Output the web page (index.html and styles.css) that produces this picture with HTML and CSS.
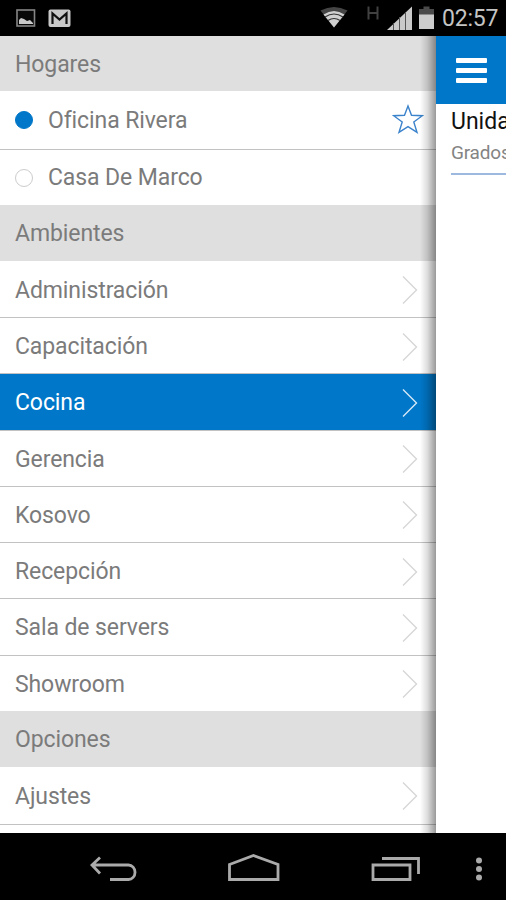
FILE: index.html
```html
<!DOCTYPE html>
<html lang="es">
<head>
<meta charset="utf-8">
<title>Hogares</title>
<link rel="stylesheet" href="styles.css">
</head>
<body>
<div class="phone">
  <header class="status">
    <svg class="notices" width="100" height="36" viewBox="0 0 100 36">
      <rect x="17" y="10" width="17.5" height="16" fill="#080808" stroke="#858585" stroke-width="1.6"/>
      <path d="M19 24v-4l2-2 3 1 3 2 3-1 3 3v1z" fill="#c9c9c9"/>
      <rect x="48.500" y="9.500" width="22" height="17.500" rx="2" fill="#c8c8c8"/>
      <path d="M52.500 24V13.500l7 6 7-6V24" fill="none" stroke="#111" stroke-width="2.200"/>
    </svg>
    <div class="signals">
      <svg width="134" height="36" viewBox="0 0 134 36">
        <path d="M14 27.500L.5 10.500Q14 3.500 27.500 10.500z" fill="#454545"/>
        <path d="M14 27.500L3.500 14.500Q14 7.500 24.500 14.500z" fill="#d0d0d0"/>
        <path d="M5 17q9-6 18 0M8 20.500q6-4 12 0" fill="none" stroke="#333" stroke-width="1.100"/>
        <path d="M48.500 6.500v13M57.500 6.500v13M48.500 13h9" fill="none" stroke="#414141" stroke-width="2"/>
        <path d="M67 30L92 6.500V30z" fill="#c9c9c9"/>
        <path d="M73.500 23v7M79.500 17v13M85.500 12v18" stroke="#555" stroke-width="1"/>
        <path d="M99 29V9h4.500V6.500h6V9h4.500v20z" fill="#4a4a4a"/>
        <path d="M99 14.500h15V29H99z" fill="#ccc"/>
      </svg>
      <span class="clock">02:57</span>
    </div>
  </header>

  <main class="stage">
    <nav class="drawer">
      <h2 class="heading">Hogares</h2>
      <a class="row home first"><i class="dot on"></i><span>Oficina Rivera</span>
        <svg class="star" width="32" height="32" viewBox="0 0 32 32"><path d="M16 2l3.500 9.300 10.800.4-8.500 6.300 3.200 10.300L16 22.600l-9 5.700 3.200-10.300L1.700 11.700l10.800-.4z" fill="none" stroke="#3b83cb" stroke-width="1.400"/></svg></a>
      <a class="row home last"><i class="dot"></i><span>Casa De Marco</span></a>
      <h2 class="heading">Ambientes</h2>
      <a class="row tall"><span>Administración</span><svg class="chev" viewBox="0 0 16 30"><path d="M1 1.500L14.500 15 1 28.500"/></svg></a>
      <a class="row"><span>Capacitación</span><svg class="chev" viewBox="0 0 16 30"><path d="M1 1.500L14.500 15 1 28.500"/></svg></a>
      <a class="row active"><span>Cocina</span><svg class="chev" viewBox="0 0 16 30"><path d="M1 1.500L14.500 15 1 28.500"/></svg></a>
      <a class="row"><span>Gerencia</span><svg class="chev" viewBox="0 0 16 30"><path d="M1 1.500L14.500 15 1 28.500"/></svg></a>
      <a class="row"><span>Kosovo</span><svg class="chev" viewBox="0 0 16 30"><path d="M1 1.500L14.500 15 1 28.500"/></svg></a>
      <a class="row"><span>Recepción</span><svg class="chev" viewBox="0 0 16 30"><path d="M1 1.500L14.500 15 1 28.500"/></svg></a>
      <a class="row"><span>Sala de servers</span><svg class="chev" viewBox="0 0 16 30"><path d="M1 1.500L14.500 15 1 28.500"/></svg></a>
      <a class="row last"><span>Showroom</span><svg class="chev" viewBox="0 0 16 30"><path d="M1 1.500L14.500 15 1 28.500"/></svg></a>
      <h2 class="heading">Opciones</h2>
      <a class="row end"><span>Ajustes</span><svg class="chev" viewBox="0 0 16 30"><path d="M1 1.500L14.500 15 1 28.500"/></svg></a>
    </nav>
    <section class="page">
      <div class="bar"><i></i><i></i><i></i></div>
      <div class="setting">
        <div class="title">Unidad</div>
        <div class="sub">Grados</div>
      </div>
    </section>
  </main>

  <footer class="navbar">
    <svg width="506" height="67" viewBox="0 0 506 67">
      <g fill="none" stroke="#aaa" stroke-width="2.800">
        <path d="M92 32h36.500a6.500 7.200 0 0 1 0 14.500H110M100 24.500L92 32l8 8.500"/>
        <path d="M229.500 31.500l24-9 24.500 9v15h-48.500z"/>
        <path d="M373 32h37v14.500h-37zM382 25.500h36.500V41"/>
      </g>
      <g fill="#aaa"><circle cx="479" cy="27.500" r="3"/><circle cx="479" cy="36" r="3"/><circle cx="479" cy="44.500" r="3"/></g>
    </svg>
  </footer>
</div>
</body>
</html>
```
FILE: styles.css
```css
* { box-sizing: border-box; }
body { margin: 0; font-family: Roboto, "Liberation Sans", sans-serif; background: #000; }
.phone { width: 506px; height: 900px; overflow: hidden; display: flex; flex-direction: column; }
svg { display: block; flex: none; }

.status { height: 36px; flex: none; display: flex; justify-content: space-between; background: #000; }
.signals { display: flex; width: 186px; }
.signals svg { margin-right: -12px; }
.clock { font-size: 23px; line-height: 38px; color: #c4c4c4; letter-spacing: -0.2px; }

.stage { height: 797px; flex: none; display: flex; overflow: hidden; background: #fff; }
.drawer { position: relative; width: 436px; flex: none; }
.drawer::after {
  content: "";
  position: absolute;
  inset: 0 0 0 auto;
  width: 16px;
  background: linear-gradient(to right, rgba(0,0,0,0), rgba(0,0,0,.13) 45%, rgba(0,0,0,.4));
}
.heading {
  margin: 0; height: 56px; padding-left: 15px; background: #dfdfdf;
  font-size: 23px; font-weight: 400; line-height: 58px; letter-spacing: -0.1px; color: #7b7b7b;
}
.heading:first-child { height: 55px; line-height: 57px; }
.row {
  display: flex; align-items: center; justify-content: space-between;
  height: 56.25px; padding: 2px 18px 0 15px;
  border-bottom: 1.5px solid #c2c2c2;
  background: #fff; color: #7b7b7b; font-size: 23px; letter-spacing: -0.1px;
}
.row.home { justify-content: flex-start; height: 59px; padding-top: 0; padding-right: 12px; }
.row.home.last { height: 55px; }
.row.tall { height: 57px; }
.row.last { height: 55px; border-bottom: 0; }
.row.end { height: 58px; }
.row.active { background: #0077c8; color: #fff; }
.dot { width: 18px; height: 18px; margin-right: 15px; border-radius: 50%; border: 1px solid #ccc; }
.dot.on { background: #0077c8; border-color: #0077c8; }
.star { margin-left: auto; }
.chev { width: 16px; height: 30px; fill: none; stroke: #d6d6d6; stroke-width: 1.4; }
.active .chev { stroke: #d5e9f7; }

.page { width: 70px; overflow: hidden; }
.bar {
  height: 68px; padding: 0 19px 0 20px; background: #0077c8;
  display: flex; flex-direction: column; justify-content: center; gap: 5px;
}
.bar i { height: 5px; border-radius: 1px; background: #fff; }
.setting { margin-left: 15px; border-bottom: 2px solid #9db9df; height: 71px; white-space: nowrap; }
.title { font-size: 23px; line-height: 36px; color: #111; }
.sub { font-size: 19px; line-height: 26px; color: #848484; letter-spacing: -0.2px; }
.navbar { height: 67px; flex: none; background: #000; }
```
